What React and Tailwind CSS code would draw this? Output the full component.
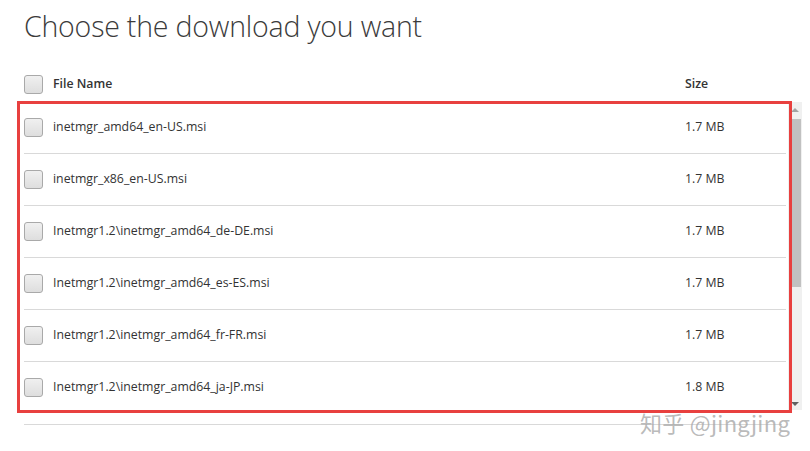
const files = [
  { name: 'inetmgr_amd64_en-US.msi', size: '1.7 MB' },
  { name: 'inetmgr_x86_en-US.msi', size: '1.7 MB' },
  { name: 'Inetmgr1.2\\inetmgr_amd64_de-DE.msi', size: '1.7 MB' },
  { name: 'Inetmgr1.2\\inetmgr_amd64_es-ES.msi', size: '1.7 MB' },
  { name: 'Inetmgr1.2\\inetmgr_amd64_fr-FR.msi', size: '1.7 MB' },
  { name: 'Inetmgr1.2\\inetmgr_amd64_ja-JP.msi', size: '1.8 MB' },
];

function Box() {
  return (
    <span className="block w-[19px] h-[19px] shrink-0 rounded-[3px] border border-[#a9a9a9] bg-gradient-to-b from-[#f0f0f0] to-[#dedede]" />
  );
}

export default function App() {
  return (
    <div className="relative w-[810px] h-[451px] overflow-hidden bg-white text-[#333] font-['Open_Sans',sans-serif]">
      <h1 className="pl-6 pt-[6px] text-[28.5px] leading-[40px] font-light text-[#3b3b3b] tracking-[-0.2px]">
        Choose the download you want
      </h1>

      {/* header */}
      <div className="mt-[29px] flex items-center h-[19px] pl-6 text-[12.3px] font-semibold">
        <Box />
        <span className="ml-[10px] w-[632px]">File Name</span>
        <span>Size</span>
      </div>

      {/* list */}
      <div className="mt-[8px] ml-6 flex h-[308px]">
        <div className="w-[762px] overflow-hidden">
          {files.map((f) => (
            <div key={f.name} className="flex items-center h-[52px] border-b border-[#d9d9d9] text-[12.3px]">
              <Box />
              <span className="ml-[10px] w-[632px]">{f.name}</span>
              <span>{f.size}</span>
            </div>
          ))}
        </div>
        <div className="ml-[2px] w-[14px] bg-[#f0f0f0] flex flex-col items-center">
          <span className="mt-[6px] h-0 w-0 border-x-[4px] border-x-transparent border-b-[4px] border-b-[#a3a3a3]" />
          <span className="mt-[7px] w-[12px] h-[168px] bg-[#c1c1c1]" />
          <span className="mt-auto mb-[4px] h-0 w-0 border-x-[4px] border-x-transparent border-t-[4px] border-t-[#606060]" />
        </div>
      </div>

      <div className="mt-[14px] ml-6 w-[758px] h-px bg-[#d9d9d9]" />

      {/* annotation */}
      <div className="absolute left-[17px] top-[101px] w-[775px] h-[312px] border-[3px] border-[#e8403f]" />

      {/* watermark */}
      <div className="absolute left-[640px] top-[407px] text-[22px] leading-[30px] text-[#a8a8a8]/80 font-['Noto_Sans_CJK_SC',sans-serif] tracking-[0.3px]">
        知乎 @jingjing
      </div>
    </div>
  );
}
